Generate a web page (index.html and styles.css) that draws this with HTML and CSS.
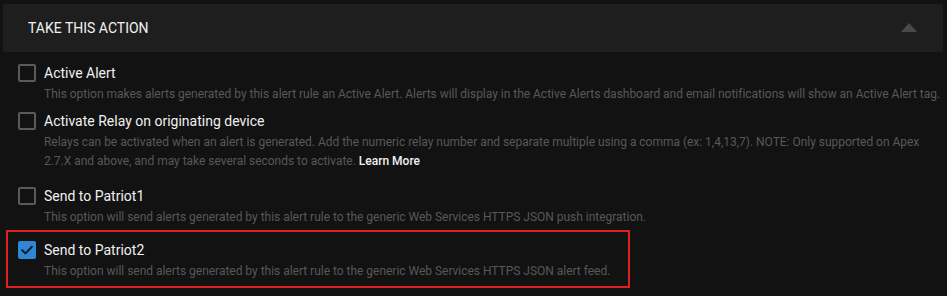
FILE: index.html
```html
<!DOCTYPE html>
<html>
<head>
<meta charset="utf-8">
<link rel="stylesheet" href="styles.css">
</head>
<body>
<div class="panel">
  <div class="panel-header">
    <span class="panel-title">TAKE THIS ACTION</span>
    <span class="caret"></span>
  </div>
  <div class="options">
    <div class="option opt-1">
      <span class="checkbox"></span>
      <div class="option-text">
        <div class="option-title">Active Alert</div>
        <div class="option-desc">This option makes alerts generated by this alert rule an Active Alert. Alerts will display in the Active Alerts dashboard and email notifications will show an Active Alert tag.</div>
      </div>
    </div>
    <div class="option opt-2">
      <span class="checkbox"></span>
      <div class="option-text">
        <div class="option-title">Activate Relay on originating device</div>
        <div class="option-desc">Relays can be activated when an alert is generated. Add the numeric relay number and separate multiple using a comma (ex: 1,4,13,7). NOTE: Only supported on Apex 2.7.X and above, and may take several seconds to activate. <a class="learn-more">Learn More</a></div>
      </div>
    </div>
    <div class="option opt-3">
      <span class="checkbox"></span>
      <div class="option-text">
        <div class="option-title">Send to Patriot1</div>
        <div class="option-desc">This option will send alerts generated by this alert rule to the generic Web Services HTTPS JSON push integration.</div>
      </div>
    </div>
    <div class="option highlight">
      <span class="checkbox checked">
        <svg viewBox="0 0 18 18" width="18" height="18"><path d="M4.2 9.2 L7.6 12.4 L13.8 5.8" fill="none" stroke="#0d1b2a" stroke-width="2" stroke-linecap="round" stroke-linejoin="round"/></svg>
      </span>
      <div class="option-text">
        <div class="option-title">Send to Patriot2</div>
        <div class="option-desc">This option will send alerts generated by this alert rule to the generic Web Services HTTPS JSON alert feed.</div>
      </div>
    </div>
  </div>
</div>
</body>
</html>
```
FILE: styles.css
```css
html, body {
  margin: 0;
  padding: 0;
  background: #121212;
  font-family: Roboto, "Liberation Sans", sans-serif;
}
.panel {
  padding: 4px 3px 0 3px;
}
.panel-header {
  height: 48px;
  background: #1e1e1e;
  display: flex;
  align-items: center;
  justify-content: space-between;
  padding: 0 26px 0 25px;
  margin-right: 1px;
}
.panel-title {
  color: #f2f2f2;
  font-size: 14px;
}
.caret {
  width: 0;
  height: 0;
  border-left: 8px solid transparent;
  border-right: 8px solid transparent;
  border-bottom: 9px solid #4a4a4a;
  margin-top: -1px;
}
.options {
  padding: 12px 0 0 3px;
}
.option {
  display: flex;
  align-items: flex-start;
  gap: 8px;
  padding-left: 12px;
}
.opt-1 { margin-bottom: 8px; }
.opt-2 { margin-bottom: 16px; }
.opt-3 { margin-bottom: 3px; }
.checkbox {
  flex: none;
  width: 18px;
  height: 18px;
  box-sizing: border-box;
  border: 2px solid #5a5a5a;
  border-radius: 2px;
}
.checkbox.checked {
  border: none;
  background: #2f86d6;
}
.checkbox svg {
  display: block;
}
.option-title {
  color: #f0f0f0;
  font-size: 14px;
  line-height: 18px;
}
.option-desc {
  margin-top: 3px;
  color: #585858;
  font-size: 12px;
  line-height: 19px;
  letter-spacing: -0.02px;
}
.learn-more {
  color: #f0f0f0;
  font-weight: 500;
  letter-spacing: 0;
}
.highlight {
  width: fit-content;
  border: 2px solid #e0201f;
  padding: 9px 18px 5px 10px;
}
```
